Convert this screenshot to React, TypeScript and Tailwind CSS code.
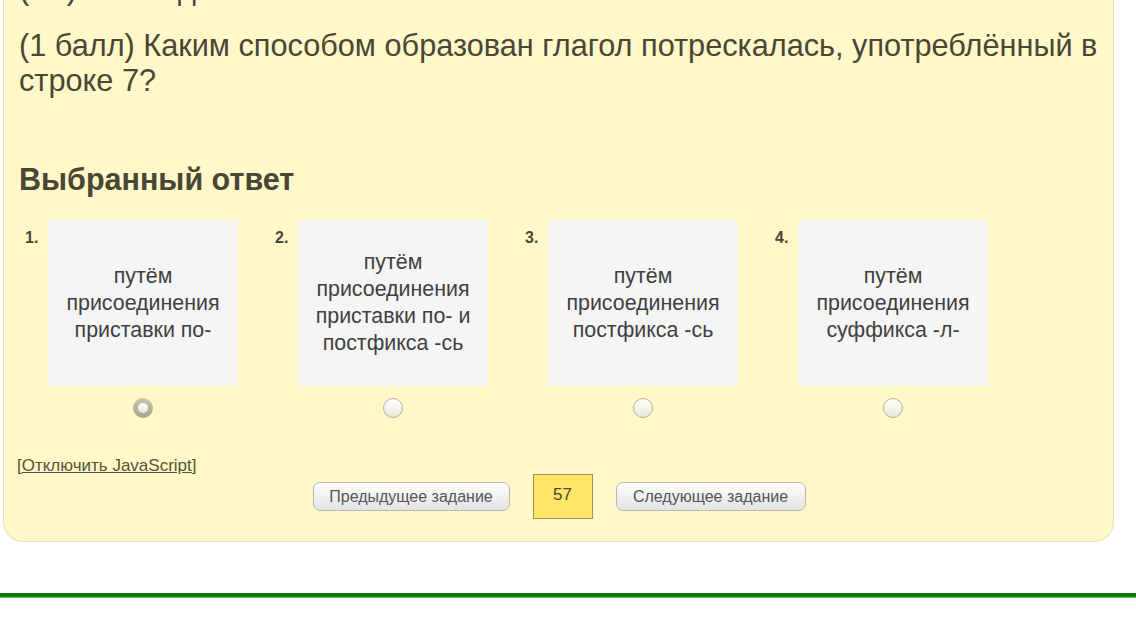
import React, { useState } from 'react';

const options = [
  ['путём', 'присоединения', 'приставки по-'],
  ['путём', 'присоединения', 'приставки по- и', 'постфикса -сь'],
  ['путём', 'присоединения', 'постфикса -сь'],
  ['путём', 'присоединения', 'суффикса -л-'],
];

function Radio({ checked, onClick }: { checked: boolean; onClick: () => void }) {
  if (checked) {
    return (
      <button
        onClick={onClick}
        className="w-[20px] h-[20px] rounded-full bg-gradient-to-b from-[#c9c6ad] to-[#a8a58c] flex items-center justify-center"
      >
        <span className="w-[10px] h-[10px] rounded-full bg-gradient-to-b from-[#ffffff] to-[#e6e6e0]" />
      </button>
    );
  }
  return (
    <button
      onClick={onClick}
      className="w-[20px] h-[20px] rounded-full border border-[#b5b29c] bg-gradient-to-b from-[#ffffff] to-[#ebe9d8]"
    />
  );
}

export default function App() {
  const [selected, setSelected] = useState(0);

  return (
    <div
      className="w-full h-[640px] bg-white overflow-hidden"
      style={{ fontFamily: '"Liberation Sans", Arial, sans-serif' }}
    >
      <div className="ml-[3px] w-[1111px] bg-[#fff8c9] border-x border-b border-[#e8e1bb] rounded-b-[20px] pl-[15px] pr-[10px] pb-[22px]">
        <div className="-mt-[29px] text-[30.7px] leading-[35px] text-[#4a4636]">(А1) Ответ дайте</div>

        <p className="mt-[22px] text-[30.7px] leading-[35px] text-[#4a4636]">
          (1 балл) Каким способом образован глагол потрескалась, употреблённый в строке 7?
        </p>

        <h2 className="mt-[64px] text-[30.5px] leading-[35px] font-bold text-[#4a4636]">Выбранный ответ</h2>

        <div className="mt-[23px] flex gap-[37px] pl-[6px]">
          {options.map((lines, i) => (
            <div key={i} className="flex">
              <div className="w-[23px] pt-[10px] text-[16px] font-bold text-[#4a4636] leading-[16px]">{i + 1}.</div>
              <div className="flex flex-col items-center">
                <div
                  className="w-[190px] h-[166px] bg-[#f5f5f5] flex flex-col items-center justify-center text-center text-[21.4px] leading-[27px] text-[#3f3f3f] cursor-pointer"
                  onClick={() => setSelected(i)}
                >
                  {lines.map((l) => (
                    <div key={l}>{l}</div>
                  ))}
                </div>
                <div className="mt-[12px] flex">
                  <Radio checked={selected === i} onClick={() => setSelected(i)} />
                </div>
              </div>
            </div>
          ))}
        </div>

        <div className="mt-[40px] -ml-[2px] text-[17px] leading-[16px] text-[#5a5238]">
          [<a href="#" className="underline">Отключить JavaScript</a>]
        </div>

        <div className="flex justify-center items-center gap-[23px] pr-[4px]">
          <button className="h-[29px] w-[197px] rounded-[7px] border border-[#b8b8b0] bg-gradient-to-b from-[#ffffff] to-[#e3e3e3] text-[16px] text-[#555555]">
            Предыдущее задание
          </button>
          <div className="w-[60px] h-[45px] bg-[#ffe566] border border-[#a3935a] flex items-center justify-center text-[17px] text-[#4a4636] pb-[4px]">
            57
          </div>
          <button className="h-[29px] w-[190px] rounded-[7px] border border-[#b8b8b0] bg-gradient-to-b from-[#ffffff] to-[#e3e3e3] text-[16px] text-[#555555]">
            Следующее задание
          </button>
        </div>
      </div>

      <div className="mt-[51px] h-[4px] bg-[#0e7a0e]" />
      <div className="h-[1px] bg-[#6fbf6f]" />
    </div>
  );
}
